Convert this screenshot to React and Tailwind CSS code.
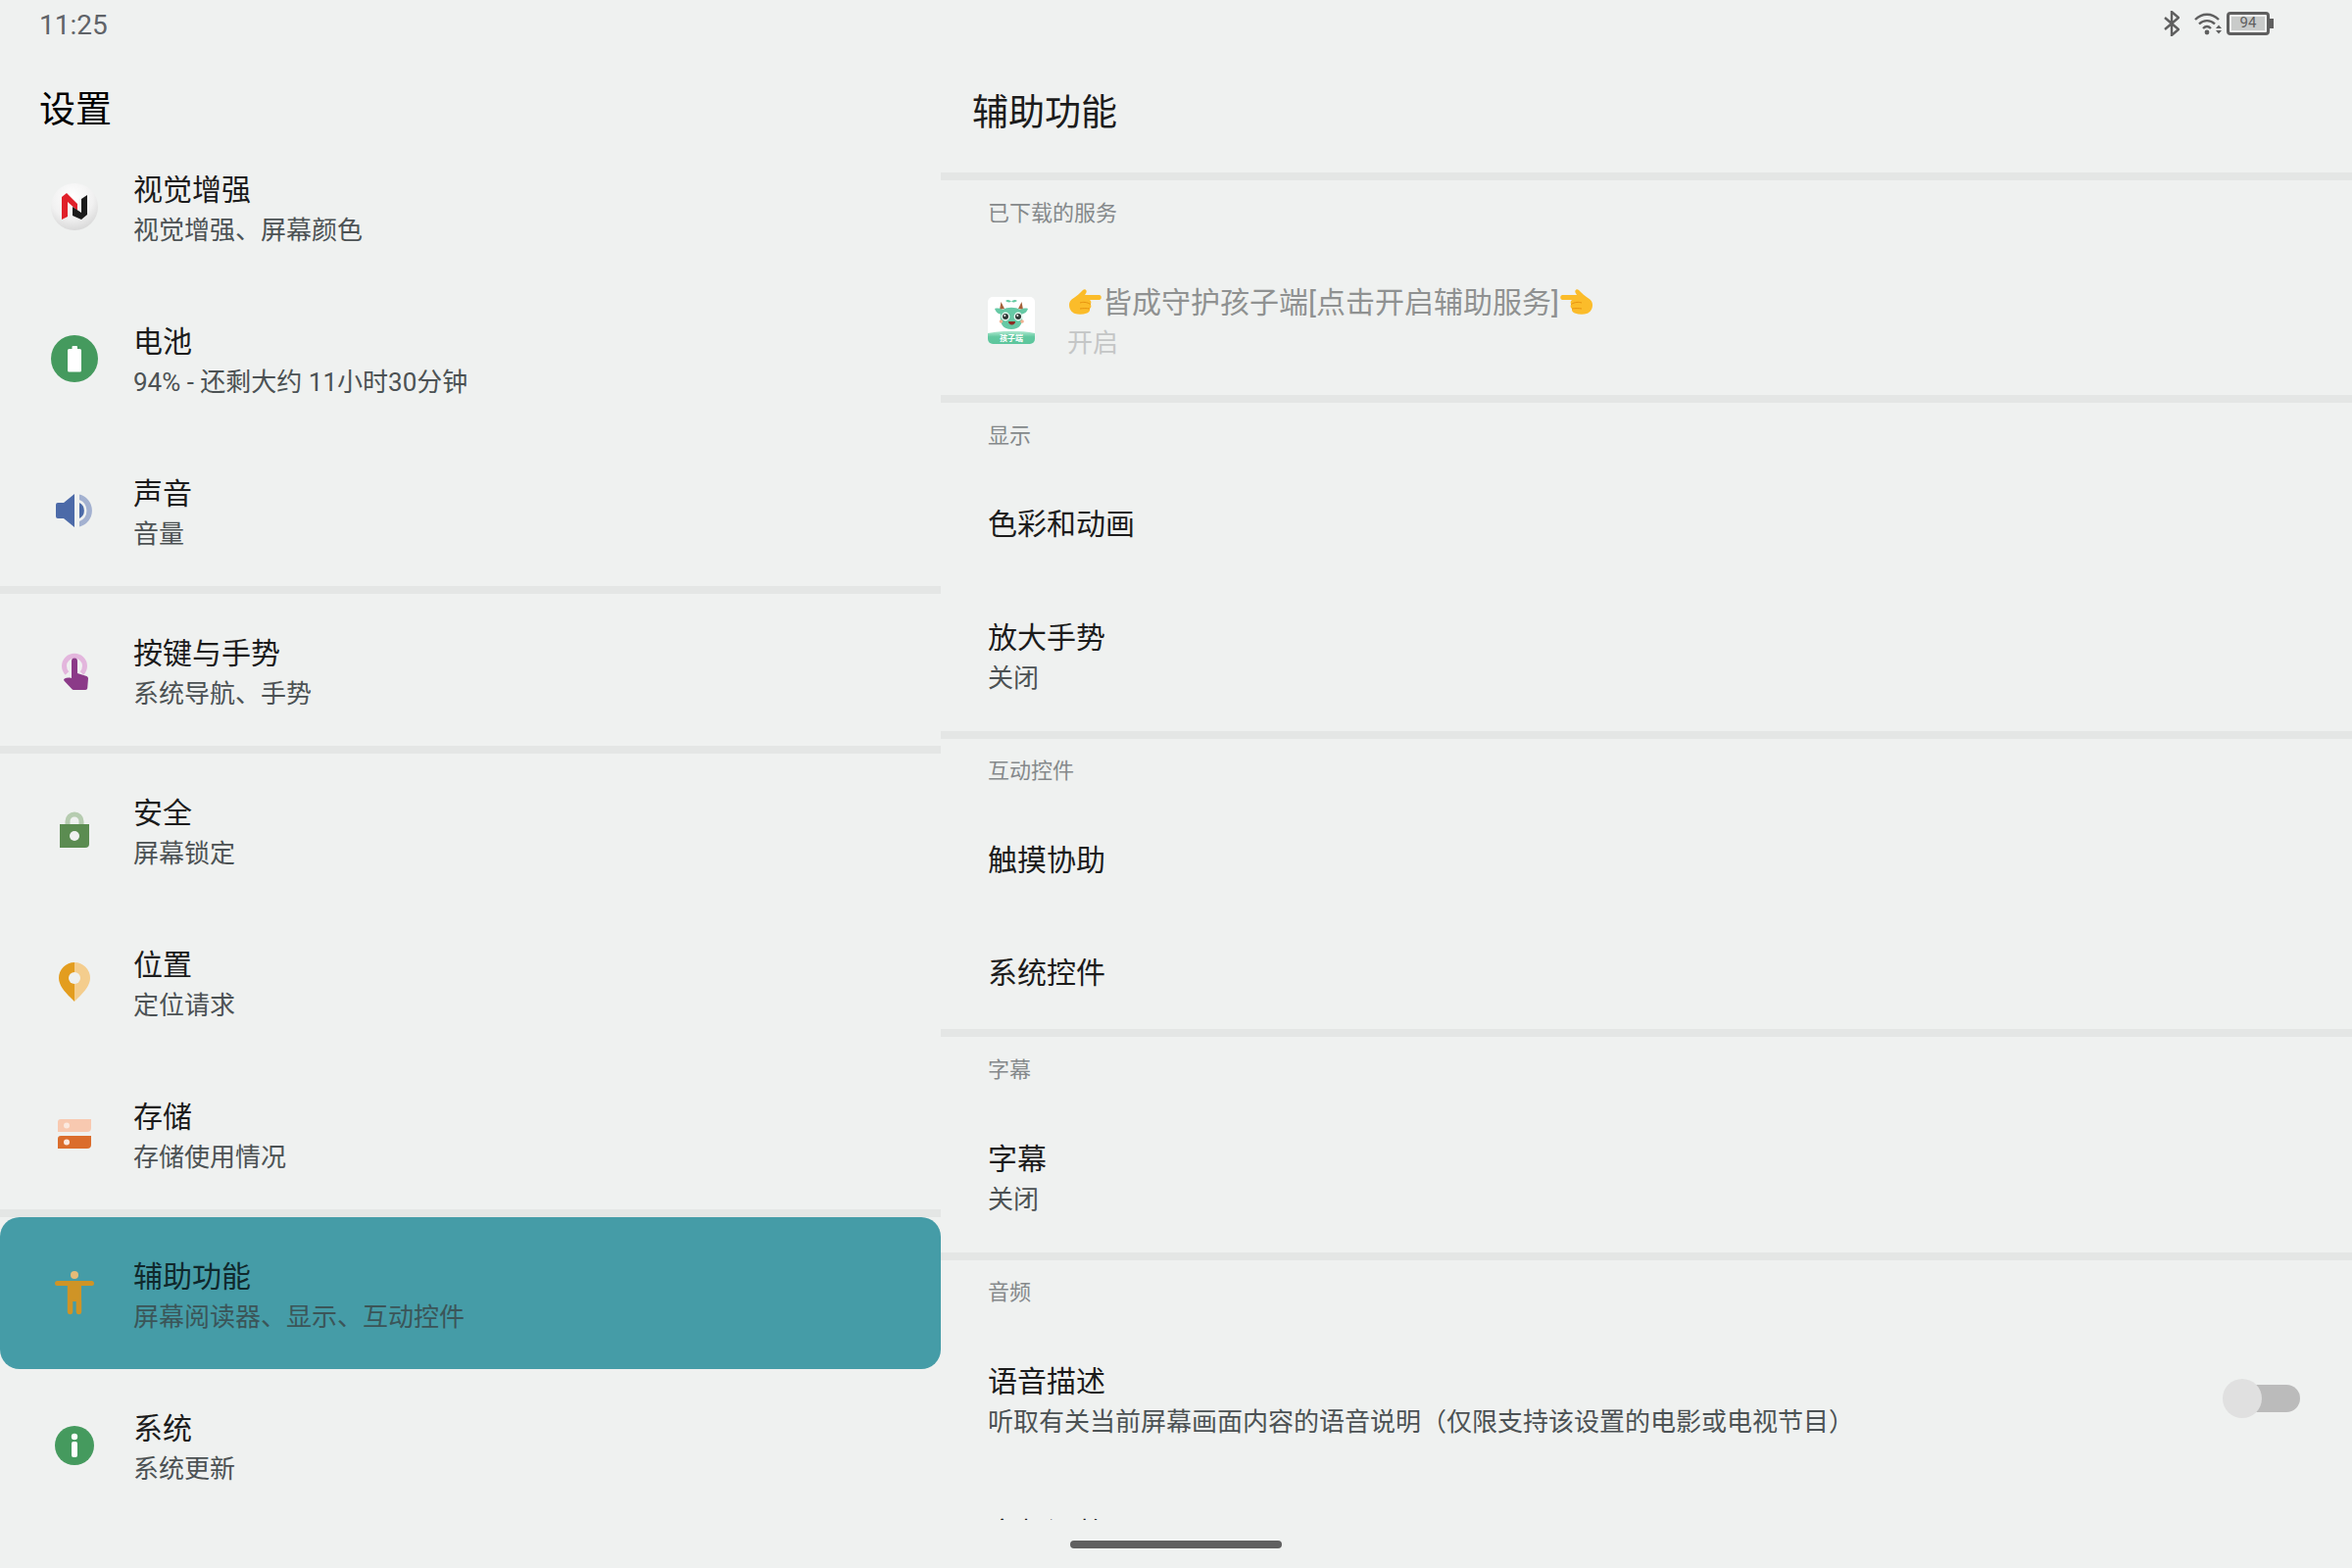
const cjk = "font-['Roboto','Noto_Sans_CJK_SC',sans-serif]";

function NubiaIcon() {
  return (
    <svg viewBox="0 0 48 48" className="h-12 w-12">
      <defs>
        <radialGradient id="ball" cx="45%" cy="30%" r="75%">
          <stop offset="0%" stopColor="#ffffff" />
          <stop offset="60%" stopColor="#f1f1f1" />
          <stop offset="100%" stopColor="#d4d4d4" />
        </radialGradient>
      </defs>
      <circle cx="24" cy="24" r="24" fill="url(#ball)" />
      <path d="M11 14l5-4 11 11v7l-10-9v15l-6 3z" fill="#e0202a" />
      <path d="M22 24l9 6V16l6-4v20l-6 5-9-4z" fill="#1c1c1c" />
    </svg>
  );
}

function BatteryIcon() {
  return (
    <svg viewBox="0 0 48 48" className="h-12 w-12">
      <circle cx="24" cy="24" r="24" fill="#459a5e" />
      <path d="M21.500 12a1 1 0 0 1 1-1h3.500a1 1 0 0 1 1 1v2h2.500a1.500 1.500 0 0 1 1.500 1.500V36a1.500 1.500 0 0 1-1.500 1.500H18.500a1.500 1.500 0 0 1-1.500-1.500V15.500a1.500 1.500 0 0 1 1.500-1.500h3z" fill="#ffffff" />
    </svg>
  );
}

function SoundIcon() {
  return (
    <svg viewBox="0 0 48 48" className="h-12 w-12">
      <path d="M7 16h6L24 7v34L13 32H7a2 2 0 0 1-2-2V18a2 2 0 0 1 2-2z" fill="#4c6aa8" />
      <path d="M29 16a9 9 0 0 1 0 16z" fill="#4c6aa8" />
      <path d="M29 7.500a17 17 0 0 1 0 33v-5.400a12 12 0 0 0 0-22.200z" fill="#a3b1d0" />
    </svg>
  );
}

function GestureIcon() {
  return (
    <svg viewBox="0 0 48 48" className="h-12 w-12">
      <path d="M16.500 27a10.500 10.500 0 1 1 15 0" fill="none" stroke="#e3b6dd" strokeWidth="5" />
      <path d="M21 14.500a3 3 0 0 1 6 0V27l9.500 3a2.500 2.500 0 0 1 1.500 2.300l-.8 10a2 2 0 0 1-2 1.700H23a2 2 0 0 1-1.500-.7l-8-8.500a1.500 1.500 0 0 1 .3-2.200c2-1.300 4.700-1.300 7.200-.6z" fill="#8b3a88" />
    </svg>
  );
}

function LockIcon() {
  return (
    <svg viewBox="0 0 48 48" className="h-12 w-12">
      <path d="M17 19v-4a7 7 0 0 1 14 0v4" fill="none" stroke="#b6ccb0" strokeWidth="5" />
      <path d="M9 18h30v20a4 4 0 0 1-4 4H9z" fill="#5b8c51" />
      <circle cx="24" cy="30" r="5" fill="#eff1f0" />
    </svg>
  );
}

function PinIcon() {
  return (
    <svg viewBox="0 0 48 48" className="h-12 w-12">
      <path d="M24 4a16 16 0 0 0-16 16c0 9 9 17 16 24z" fill="#e39d1f" />
      <path d="M24 4a16 16 0 0 1 16 16c0 9-9 17-16 24z" fill="#f4cd8d" />
      <circle cx="24" cy="20" r="6" fill="#eff1f0" />
    </svg>
  );
}

function StorageIcon() {
  return (
    <svg viewBox="0 0 48 48" className="h-12 w-12">
      <path d="M10 9h31v9a4 4 0 0 1-4 4H7v-10a3 3 0 0 1 3-3z" fill="#f8c9b0" />
      <path d="M10 26h31v9a4 4 0 0 1-4 4H7V29a3 3 0 0 1 3-3z" fill="#db6d2c" />
      <circle cx="16" cy="15.500" r="3" fill="#fbe9df" />
      <circle cx="16" cy="32.500" r="3" fill="#fbe9df" />
    </svg>
  );
}

function AccessIcon() {
  return (
    <svg viewBox="0 0 48 48" className="h-12 w-12">
      <circle cx="24" cy="5" r="4" fill="#e4bb78" />
      <path d="M6.500 11h35a2.500 2.500 0 0 1 0 5H31v15h.2v12a2.800 2.800 0 0 1-5.500 0V32h-3.400v11a2.800 2.800 0 0 1-5.500 0V16H6.500a2.500 2.500 0 0 1 0-5z" fill="#cf9426" />
    </svg>
  );
}

function InfoIcon() {
  return (
    <svg viewBox="0 0 48 48" className="h-12 w-12">
      <circle cx="24" cy="24" r="20" fill="#459a5e" />
      <circle cx="24" cy="15" r="3.200" fill="#ffffff" />
      <rect x="21" y="20" width="6" height="16" rx="2" fill="#ffffff" />
    </svg>
  );
}

function PointRight() {
  return (
    <svg viewBox="0 0 36 36" className="h-9 w-9 shrink-0">
      <path d="M2 20c0-3 1.500-5 4-6.500C10 11 13 8 16 5c2-2 4.500 0 3.500 2.500L18 10h14.500c3 0 3 5 0 5H23c1.500 1 1.800 3 .8 4.500 1 1.500.8 3.500-.8 4.500.5 2-.8 4-2.800 4.500C16 30 11 30 8 29c-4-1.300-6-5-6-9z" fill="#fbbc2a" />
      <path d="M13 18c3-1 7-1 10.800 1.500M13 24c3-.5 6.500-.5 10 0" fill="none" stroke="#e8930f" strokeWidth="1" />
    </svg>
  );
}

function PointLeft() {
  return (
    <svg viewBox="0 0 36 36" className="h-9 w-9 shrink-0 -scale-x-100">
      <path d="M2 20c0-3 1.500-5 4-6.500C10 11 13 8 16 5c2-2 4.500 0 3.500 2.500L18 10h14.500c3 0 3 5 0 5H23c1.500 1 1.800 3 .8 4.500 1 1.500.8 3.500-.8 4.500.5 2-.8 4-2.800 4.500C16 30 11 30 8 29c-4-1.300-6-5-6-9z" fill="#fbbc2a" />
      <path d="M13 18c3-1 7-1 10.800 1.500M13 24c3-.5 6.500-.5 10 0" fill="none" stroke="#e8930f" strokeWidth="1" />
    </svg>
  );
}

function MascotIcon() {
  return (
    <svg viewBox="0 0 48 48" className="h-12 w-12 shrink-0">
      <defs>
        <linearGradient id="band" x1="0" y1="0" x2="0" y2="1">
          <stop offset="0%" stopColor="#b4ead3" />
          <stop offset="45%" stopColor="#62c9a0" />
          <stop offset="100%" stopColor="#5cc59c" />
        </linearGradient>
      </defs>
      <rect width="48" height="48" rx="5" fill="#ffffff" />
      <path d="M0 37c14-3 34-3 48 0v6a5 5 0 0 1-5 5H5a5 5 0 0 1-5-5z" fill="url(#band)" />
      <path d="M12 13l1.500-8 3.500 7zM36 13l-1.500-8-3.500 7z" fill="#a5613a" />
      <path d="M18 4c2-1.500 4-1 6 .5 2-1.500 4-2 6-.5-2 1.500-4 2-6 .5-2 1.500-4 1-6-.5z" fill="#62c9a0" />
      <path d="M7 12c3-1 6 0 8 1 5-3 13-3 18 0 2-1 5-2 8-1-1 3-3 5-6 5.500 1 8-1 15.500-11 15.500s-12-7.500-11-15.500c-3-.5-5-2.500-6-5.500z" fill="#66c9a5" />
      <circle cx="18" cy="20" r="4.400" fill="#eafaf3" />
      <circle cx="31" cy="20" r="4.400" fill="#eafaf3" />
      <circle cx="18" cy="20" r="3" fill="#2f3a36" />
      <circle cx="31" cy="20" r="3" fill="#2f3a36" />
      <circle cx="17.300" cy="19" r="1" fill="#ffffff" />
      <circle cx="30.300" cy="19" r="1" fill="#ffffff" />
      <path d="M21 25h7c0 2-1.500 3.500-3.500 3.500S21 27 21 25z" fill="#8c2c24" />
      <circle cx="13.500" cy="25" r="1.800" fill="#f0b090" />
      <circle cx="35" cy="25" r="1.800" fill="#f0b090" />
      <text x="24" y="45" textAnchor="middle" fontSize="8" fontWeight="700" fill="#ffffff" fontFamily="Noto Sans CJK SC, sans-serif">孩子端</text>
    </svg>
  );
}

function StatusIcons() {
  return (
    <div className="flex items-center pb-[3px]">
      <svg viewBox="0 0 16 26" className="h-[26px] w-4" fill="none" stroke="#5f5f5f" strokeWidth="2.400">
        <path d="M1 7l14 12-7 6V1l7 6L1 19" />
      </svg>
      <svg viewBox="0 0 28 24" className="ml-[15px] h-6 w-7">
        <path d="M1 8c7-7 17-7 24 0M5 12.500c4.500-4.500 11.500-4.500 16 0M9 17c2.500-2.500 5.500-2.500 8 0" fill="none" stroke="#5f5f5f" strokeWidth="2.400" />
        <circle cx="13" cy="21" r="2.400" fill="#5f5f5f" />
        <path d="M22 17l3-3.500 3 3.500zM22 19h6l-3 3.500z" fill="#5f5f5f" />
      </svg>
      <div className="ml-[5px] flex items-center">
        <div className="flex h-6 w-11 items-center justify-center rounded-[4px] border-[3px] border-[#5f5f5f] p-[2px]">
          <div className="flex h-full w-full items-center justify-center bg-[#c9cbca] text-[15px] leading-none text-[#5f5f5f]">94</div>
        </div>
        <div className="h-[10px] w-1 bg-[#5f5f5f]" />
      </div>
    </div>
  );
}

const menu = [
  [
    { Icon: NubiaIcon, title: "视觉增强", sub: "视觉增强、屏幕颜色" },
    { Icon: BatteryIcon, title: "电池", sub: "94% - 还剩大约 11小时30分钟" },
    { Icon: SoundIcon, title: "声音", sub: "音量" },
  ],
  [{ Icon: GestureIcon, title: "按键与手势", sub: "系统导航、手势" }],
  [
    { Icon: LockIcon, title: "安全", sub: "屏幕锁定" },
    { Icon: PinIcon, title: "位置", sub: "定位请求" },
    { Icon: StorageIcon, title: "存储", sub: "存储使用情况" },
  ],
  [
    { Icon: AccessIcon, title: "辅助功能", sub: "屏幕阅读器、显示、互动控件", active: true },
    { Icon: InfoIcon, title: "系统", sub: "系统更新" },
  ],
];

function MenuRow({ Icon, title, sub, active }) {
  return (
    <div className={active ? "flex h-[155px] items-center rounded-[20px] bg-[#459ca7] pl-[52px]" : "flex h-[155px] items-center pl-[52px]"}>
      <Icon />
      <div className="ml-9 pt-[6px]">
        <div className={active ? "text-[30px] leading-[42px] text-[#10282c]" : "text-[30px] leading-[42px] text-[#1c1c1c]"}>{title}</div>
        <div className={active ? "text-[26px] leading-[40px] text-[#3b5558]" : "text-[26px] leading-[40px] text-[#4c5254]"}>{sub}</div>
      </div>
    </div>
  );
}

function Divider() {
  return <div className="h-2 bg-[#e4e6e5]" />;
}

function SectionHead({ children }) {
  return <div className="flex h-[66.4px] items-center pl-12 text-[22px] text-[#85898b]">{children}</div>;
}

function Row({ title, sub }) {
  return (
    <div className={sub ? "flex h-[153px] flex-col justify-center pl-12 pt-1" : "flex h-[115px] items-center pl-12"}>
      <div className="text-[30px] leading-[42px] text-[#1c1c1c]">{title}</div>
      {sub && <div className="text-[26px] leading-[40px] text-[#4c5254]">{sub}</div>}
    </div>
  );
}

export default function App() {
  return (
    <div className={`relative flex h-[1600px] w-[2400px] flex-col overflow-hidden bg-[#eff1f0] ${cjk}`}>
      <div className="flex h-[50px] items-center justify-between pr-[80px] pl-10">
        <span className="pt-[2px] text-[28px] text-[#5f6368]">11:25</span>
        <StatusIcons />
      </div>
      <div className="flex h-[1501px]">
        <div className="w-[960px] shrink-0">
          <div className="flex h-[83px] items-center pt-[42px] pl-10 text-[37px] leading-none text-black">设置</div>
          {menu.map((group, i) => (
            <div key={i}>
              {i > 0 && <Divider />}
              {group.map((item) => (
                <MenuRow key={item.title} {...item} />
              ))}
            </div>
          ))}
        </div>
        <div className="min-w-0 flex-1 overflow-hidden">
          <div className="flex h-[126px] items-center pt-1 pl-8 text-[37px] leading-none text-[#1c1c1c]">辅助功能</div>
          <Divider />
          <SectionHead>已下载的服务</SectionHead>
          <div className="flex h-[153px] items-center pl-12">
            <MascotIcon />
            <div className="ml-[33px] pt-1">
              <div className="flex items-center text-[30px] leading-[42px] text-[#8f9191]">
                <PointRight />
                <span>皆成守护孩子端[点击开启辅助服务]</span>
                <PointLeft />
              </div>
              <div className="text-[26px] leading-[40px] text-[#c4c6c6]">开启</div>
            </div>
          </div>
          <Divider />
          <SectionHead>显示</SectionHead>
          <Row title="色彩和动画" />
          <Row title="放大手势" sub="关闭" />
          <Divider />
          <SectionHead>互动控件</SectionHead>
          <Row title="触摸协助" />
          <Row title="系统控件" />
          <Divider />
          <SectionHead>字幕</SectionHead>
          <Row title="字幕" sub="关闭" />
          <Divider />
          <SectionHead>音频</SectionHead>
          <div className="flex h-[153px] items-center justify-between pt-1 pr-[53px] pl-12">
            <div>
              <div className="text-[30px] leading-[42px] text-[#1c1c1c]">语音描述</div>
              <div className="text-[26px] leading-[40px] text-[#4c5254]">听取有关当前屏幕画面内容的语音说明（仅限支持该设置的电影或电视节目）</div>
            </div>
            <div className="relative h-7 w-[60px] -translate-y-[3px] rounded-full bg-[#bbbbbb]">
              <div className="absolute top-[-6px] left-[-19px] h-10 w-10 rounded-full bg-[#e0e0e0]" />
            </div>
          </div>
          <div className="pt-[39px] pl-12 text-[30px] leading-[42px] text-[#1c1c1c]">音频调整</div>
        </div>
      </div>
      <div className="flex flex-1 justify-center pt-[21px]">
        <div className="h-2 w-[216px] rounded-full bg-[#606060]" />
      </div>
    </div>
  );
}
